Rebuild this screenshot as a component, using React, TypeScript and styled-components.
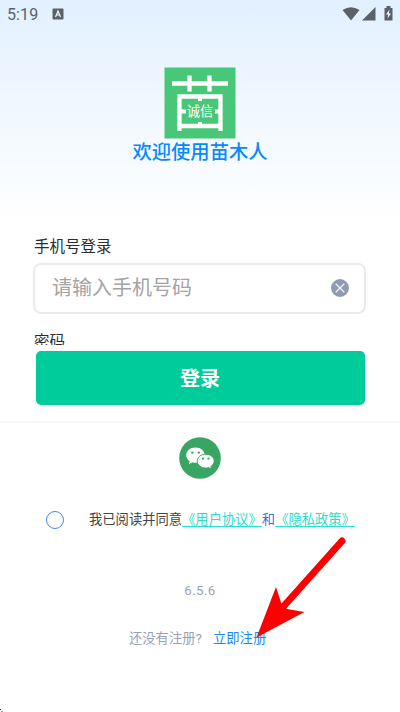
import React from 'react';
import styled, { createGlobalStyle } from 'styled-components';

const GlobalStyle = createGlobalStyle`
  * { box-sizing: border-box; }
  body { margin: 0; background: #fff; }
  button, input { font: inherit; }
`;

const Screen = styled.main`
  position: relative;
  display: flex;
  flex-direction: column;
  width: 400px;
  height: 712px;
  overflow: hidden;
  font-family: Roboto, 'Noto Sans CJK SC', sans-serif;
  background: linear-gradient(#e2f0ff 0, #ffffff 222px);
`;

const StatusBar = styled.header`
  display: flex;
  align-items: center;
  height: 27px;
  padding: 1px 6px 0 7px;
  color: #5b6168;
`;

const Clock = styled.span`
  width: 45px;
  font-size: 16px;
  letter-spacing: 0.1px;
`;

const StatusIcons = styled.div`
  display: flex;
  align-items: center;
  margin-left: auto;
`;

const Brand = styled.section`
  display: flex;
  flex-direction: column;
  align-items: center;
  height: 208px;
  padding-top: 40px;
`;

const Title = styled.h1`
  margin: 0;
  color: #0689ff;
  font-size: 19.3px;
  line-height: 28px;
  font-weight: 500;
`;

const Form = styled.section`
  display: flex;
  flex-direction: column;
  height: 188px;
  padding: 0 34px;
  border-bottom: 2px solid #f8f8f9;
`;

const Label = styled.label`
  height: 28px;
  color: #2b2d30;
  font-size: 15.5px;
  line-height: 24px;
`;

const ClippedLabel = styled(Label)`
  height: 15px;
  margin-top: 16px;
  overflow: hidden;
`;

const Field = styled.div`
  display: flex;
  align-items: center;
  flex: none;
  width: 333px;
  height: 51px;
  margin-left: -1px;
  padding: 0 15px 2px 17px;
  border: 2px solid #ebebeb;
  border-radius: 8px;
`;

const PhoneInput = styled.input`
  flex: 1;
  min-width: 0;
  padding: 0;
  border: 0;
  outline: 0;
  background: transparent;
  font-size: 20px;
  line-height: 30px;
  &::placeholder { color: #a3a3a3; opacity: 1; }
`;

const IconButton = styled.button`
  display: flex;
  padding: 0;
  border: 0;
  background: none;
`;

const SubmitButton = styled.button`
  flex: none;
  width: 329px;
  height: 54px;
  margin: 6px 0 0 1.5px;
  padding: 0 0 1px;
  border: 0;
  border-radius: 5px;
  background: #00cb9a;
  color: #fff;
  font-size: 20px;
  font-weight: 700;
`;

const SocialLogin = styled.section`
  display: flex;
  justify-content: center;
  height: 86px;
  padding-top: 14px;
`;

const Agreement = styled.section`
  display: flex;
  align-items: center;
  height: 22px;
  padding-left: 46px;
  font-size: 13.3px;
  line-height: 20px;
  color: #444;
  white-space: nowrap;
`;

const Radio = styled.span`
  width: 18px;
  height: 18px;
  margin-right: 25px;
  border: 1.5px solid #4b82ed;
  border-radius: 50%;
`;

const PolicyLink = styled.a`
  color: #2bdcc8;
  text-decoration: underline;
  text-decoration-thickness: 1px;
  text-underline-offset: 2px;
`;

const Conjunction = styled.span`
  color: #3d72dc;
`;

const Version = styled.div`
  height: 20px;
  margin-top: 50px;
  color: #9a9fb5;
  font-size: 13.3px;
  line-height: 20px;
  letter-spacing: 0.4px;
  text-align: center;
`;

const Register = styled.footer`
  display: flex;
  height: 20px;
  margin-top: 28px;
  padding-left: 129px;
  color: #9a9fb5;
  font-size: 13.3px;
  line-height: 20px;
`;

const RegisterPrompt = styled.span`
  width: 84px;
`;

const RegisterLink = styled.a`
  color: #148cf5;
`;

const Pointer = styled.svg`
  position: absolute;
  left: 250px;
  top: 530px;
`;

const CornerMark = styled.svg`
  position: absolute;
  left: 0;
  bottom: 0;
`;

const Logo = () => (
  <svg width="72" height="72" viewBox="0 0 72 72">
    <rect x=".5" y=".5" width="71" height="71" fill="#48c778" />
    <path
      d="M8 16.5H64M25.5 8.5V24.5M45.5 8.5V24.5M15.5 64V29.5H56.5V64M15.5 59H56.5"
      fill="none"
      stroke="#fff"
      strokeWidth="4.3"
    />
    <path d="M34 31h4v3h-4zM34 55h4v4h-4zM17 42.5h5v4h-5zM51 42.5h5v4h-5z" fill="#fff" />
    <text x="36" y="49" textAnchor="middle" fill="#fff" fontSize="13.3" fontFamily="Noto Sans CJK SC, sans-serif">
      诚信
    </text>
  </svg>
);

const KeyboardBadge = () => (
  <svg width="12" height="12" viewBox="0 0 12 12">
    <rect x=".5" y=".5" width="11" height="11" rx="1" fill="currentColor" />
    <path d="M3.5 9L6 3L8.5 9M4.4 7H7.6" fill="none" stroke="#f2f8ff" strokeWidth="1.2" />
  </svg>
);

const Signals = () => (
  <svg width="52" height="16" viewBox="0 0 52 16" fill="currentColor">
    <path d="M.5 4Q9 -1.5 17.5 4L9 14.5Z" />
    <path d="M33.5 1V14.5H20Z" />
    <path d="M42.5 2H44.5V0H48.5V2H50.5V14.5H42.5Z" />
    <path d="M47.5 3.5L44 8.5H46.2L45.5 12.5L49 7.5H46.8Z" fill="#edf6ff" />
  </svg>
);

const ClearIcon = () => (
  <svg width="18" height="18" viewBox="0 0 18 18">
    <circle cx="9" cy="9" r="9" fill="#919cb4" />
    <path d="M4.7 4.7L13.3 13.3M13.3 4.7L4.7 13.3" stroke="#f0f3fa" strokeWidth="1.3" />
  </svg>
);

const WeChatIcon = () => (
  <svg width="42" height="42" viewBox="0 0 42 42">
    <circle cx="21" cy="21" r="20.8" fill="#38a662" />
    <path
      d="M16.5 10.5c-5.3 0-9.3 3.4-9.3 7.7 0 2.5 1.3 4.6 3.5 6l-.9 3 3.5-1.9q1.6.5 3.2.5c5.2 0 9.3-3.4 9.3-7.6s-4.1-7.7-9.3-7.7z"
      fill="#fff"
    />
    <path
      d="M26.7 17.2c-4.8 0-8.5 3.1-8.5 6.9s3.7 7 8.5 7c1.1 0 2.1-.2 3-.5l2.9 1.7-.7-2.8c2-1.3 3.3-3.2 3.3-5.4 0-3.8-3.7-6.9-8.5-6.9z"
      fill="#fff"
      stroke="#38a662"
      strokeWidth="1"
    />
    <g fill="#38a662">
      <circle cx="13.3" cy="15.6" r="1.2" />
      <circle cx="19.8" cy="15.6" r="1.2" />
      <circle cx="24" cy="21.7" r="1.1" />
      <circle cx="29.4" cy="21.7" r="1.1" />
    </g>
  </svg>
);

export default function App() {
  return (
    <>
      <GlobalStyle />
      <Screen>
        <StatusBar>
          <Clock>5:19</Clock>
          <KeyboardBadge />
          <StatusIcons><Signals /></StatusIcons>
        </StatusBar>
        <Brand>
          <Logo />
          <Title>欢迎使用苗木人</Title>
        </Brand>
        <Form>
          <Label htmlFor="phone">手机号登录</Label>
          <Field>
            <PhoneInput id="phone" placeholder="请输入手机号码" />
            <IconButton type="button" aria-label="清除"><ClearIcon /></IconButton>
          </Field>
          <ClippedLabel as="div">密码</ClippedLabel>
          <SubmitButton type="button">登录</SubmitButton>
        </Form>
        <SocialLogin>
          <IconButton type="button" aria-label="微信"><WeChatIcon /></IconButton>
        </SocialLogin>
        <Agreement>
          <Radio />
          <span>
            我已阅读并同意<PolicyLink>《用户协议》</PolicyLink>
            <Conjunction>和</Conjunction>
            <PolicyLink>《隐私政策》</PolicyLink>
          </span>
        </Agreement>
        <Version>6.5.6</Version>
        <Register>
          <RegisterPrompt>还没有注册?</RegisterPrompt>
          <RegisterLink>立即注册</RegisterLink>
        </Register>
        <Pointer width="100" height="112" viewBox="0 0 100 112">
          <path d="M92 11L33 77" stroke="#fe0000" strokeWidth="7" strokeLinecap="round" />
          <path d="M6.5 107.5L26 57L31.5 74L37 79L54.5 82Z" fill="#fe0000" />
        </Pointer>
        <CornerMark width="4" height="3" viewBox="0 0 4 3">
          <path d="M0 0h1v1H0z" fill="#222" />
          <path d="M1 2h2v1H1z" fill="#999" />
        </CornerMark>
      </Screen>
    </>
  );
}
